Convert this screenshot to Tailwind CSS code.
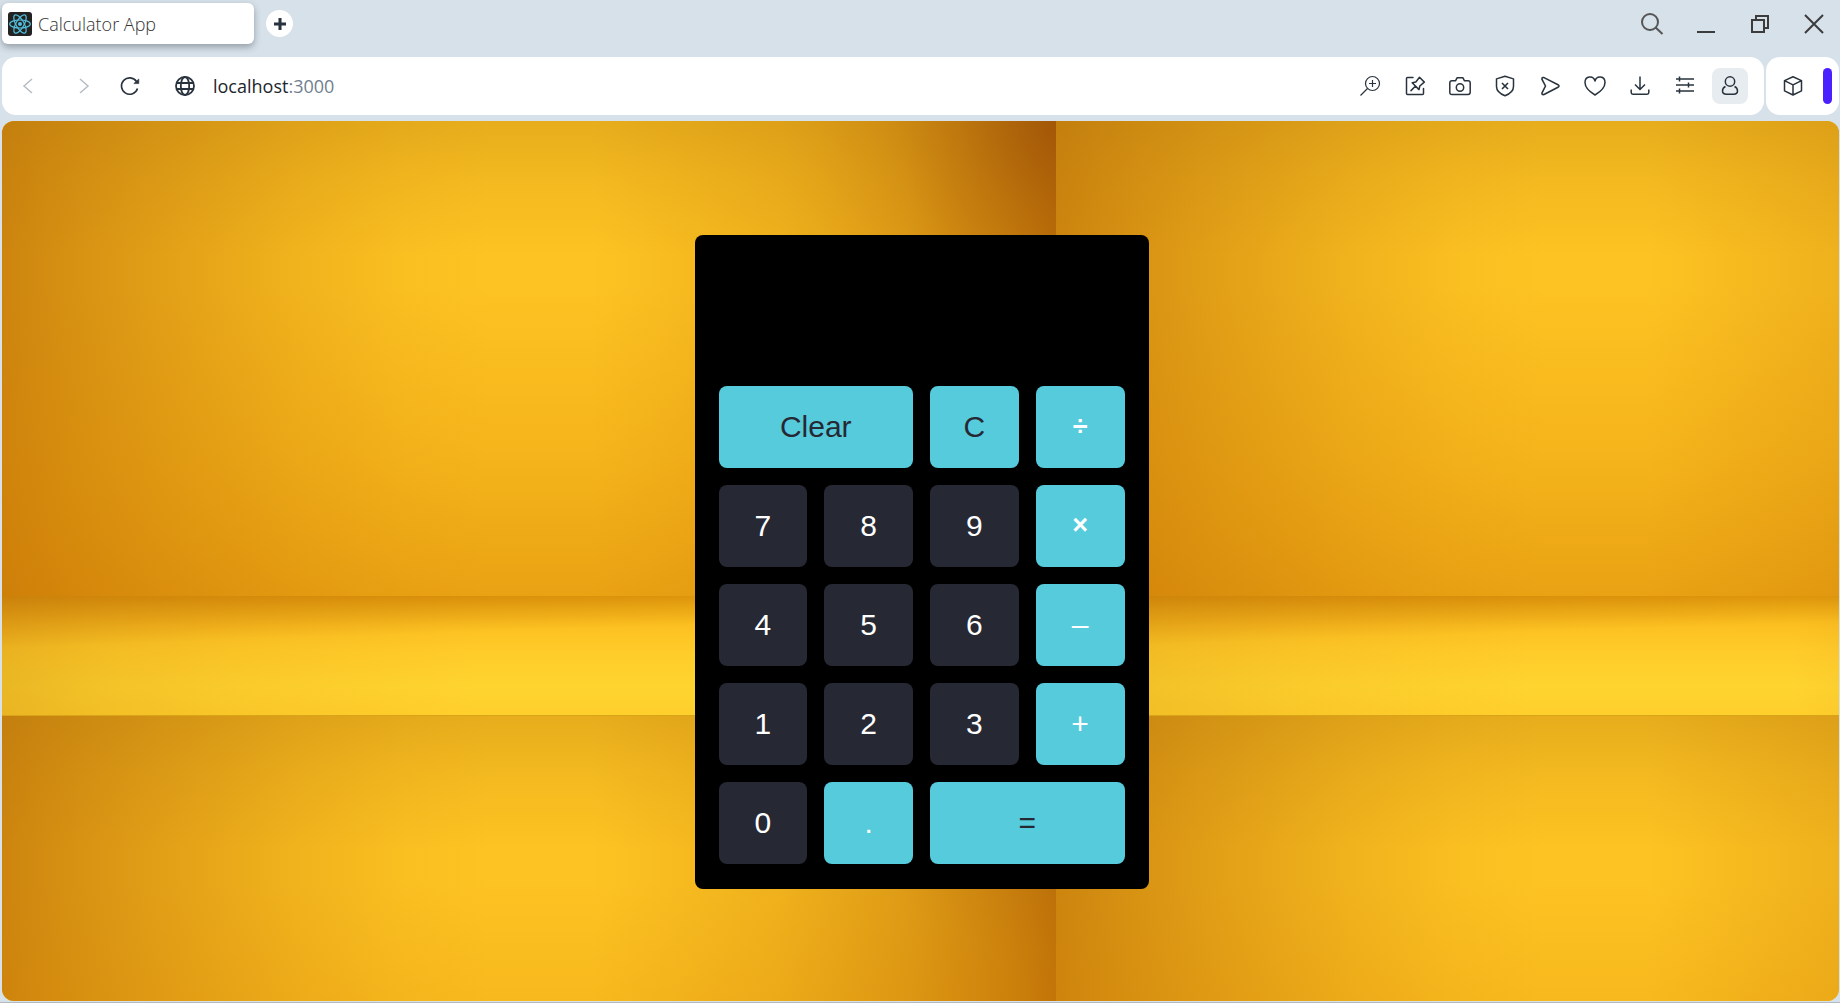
<!DOCTYPE html>
<html lang="en">
<head>
<meta charset="utf-8">
<meta name="viewport" content="width=device-width, initial-scale=1">
<title>Calculator App</title>
<script src="https://cdn.jsdelivr.net/npm/@tailwindcss/browser@4"></script>
</head>
<body class="flex min-h-screen flex-col border-b border-[#b4b9be] bg-[#d7e1ea] font-['Open_Sans',sans-serif] text-[#29333d]">

<!-- Tab strip -->
<header class="flex h-[57px] items-start justify-between pt-[3px] pr-2.5 pl-0.5">
  <div class="flex items-center gap-3">
    <a href="#" class="flex h-[41px] w-[252px] items-center gap-1.5 rounded-md bg-white pl-1.5 text-lg font-light text-[#333] shadow-[0_3px_7px_rgba(60,70,80,0.45)]">
      <svg class="size-6 shrink-0" viewBox="0 0 24 24" fill="none" stroke="#53c1de" stroke-width="1.2" aria-hidden="true">
        <rect width="24" height="24" rx="3" fill="#222" stroke="none"/>
        <ellipse cx="12" cy="12" rx="10.3" ry="4"/>
        <ellipse cx="12" cy="12" rx="10.3" ry="4" transform="rotate(60 12 12)"/>
        <ellipse cx="12" cy="12" rx="10.3" ry="4" transform="rotate(120 12 12)"/>
        <circle cx="12" cy="12" r="2" fill="#53c1de" stroke="none"/>
      </svg>
      <span>Calculator App</span>
    </a>
    <button class="flex size-[27px] items-center justify-center rounded-full bg-white" aria-label="New tab">
      <svg class="size-3" viewBox="0 0 12 12" stroke="#29333d" stroke-width="3" aria-hidden="true"><path d="M6 0v12M0 6h12"/></svg>
    </button>
  </div>
  <div class="flex gap-[22px] pt-[5px] text-[#3c3c3c]">
    <button class="flex size-8 items-center justify-center" aria-label="Search tabs">
      <svg class="size-6" viewBox="0 0 24 24" fill="none" stroke="#555" stroke-width="2" aria-hidden="true"><circle cx="10" cy="10" r="8"/><path d="M15.6 15.6 22.5 22"/></svg>
    </button>
    <button class="flex size-8 items-center justify-center" aria-label="Minimize">
      <svg class="size-6" viewBox="0 0 24 24" stroke="currentColor" stroke-width="2" aria-hidden="true"><path d="M3 20h18"/></svg>
    </button>
    <button class="flex size-8 items-center justify-center" aria-label="Restore">
      <svg class="size-6" viewBox="0 0 24 24" fill="none" stroke="currentColor" stroke-width="2" aria-hidden="true"><path d="M4 8h12v12H4zM8 8V4h12v12h-4"/></svg>
    </button>
    <button class="flex size-8 items-center justify-center" aria-label="Close">
      <svg class="size-6" viewBox="0 0 24 24" stroke="currentColor" stroke-width="2" aria-hidden="true"><path d="m3 3 18 18M21 3 3 21"/></svg>
    </button>
  </div>
</header>

<!-- Address bar -->
<nav class="flex h-[58px] gap-0.5 pr-px pl-0.5">
  <div class="flex flex-1 items-center rounded-[14px] bg-white pr-4 pl-2">
    <button class="flex size-9 items-center justify-center" aria-label="Back">
      <svg class="size-6" viewBox="0 0 24 24" fill="none" stroke="#b6bdc3" stroke-width="1.5" aria-hidden="true"><path d="m16 5-8 7 8 7"/></svg>
    </button>
    <button class="ml-5 flex size-9 items-center justify-center" aria-label="Forward">
      <svg class="size-6" viewBox="0 0 24 24" fill="none" stroke="#b6bdc3" stroke-width="1.5" aria-hidden="true"><path d="m8 5 8 7-8 7"/></svg>
    </button>
    <button class="ml-2.5 flex size-9 items-center justify-center" aria-label="Reload">
      <svg class="size-6" viewBox="0 0 24 24" fill="none" stroke="currentColor" stroke-width="1.6" aria-hidden="true"><path d="M18.500 7.500A8.200 8.200 0 1 0 19.500 14.500"/><path d="M20.800 5v4.600h-5z" fill="currentColor" stroke-width=".6"/></svg>
    </button>
    <button class="ml-[19px] flex size-9 items-center justify-center" aria-label="Site information">
      <svg class="size-6" viewBox="0 0 24 24" fill="none" stroke="currentColor" stroke-width="1.8" aria-hidden="true"><circle cx="12" cy="12" r="9"/><ellipse cx="12" cy="12" rx="4.200" ry="9"/><path d="M3.800 9h16.400M3.800 15h16.400"/></svg>
    </button>
    <div class="ml-2.5 flex-1 text-lg text-[#20262c]" role="textbox" aria-label="Address">localhost<span class="text-[#71808f]">:3000</span></div>
    <div class="flex gap-[9px]">
      <button class="flex size-9 items-center justify-center" aria-label="Zoom">
        <svg class="size-6" viewBox="0 0 24 24" fill="none" stroke="currentColor" stroke-width="1.2" aria-hidden="true"><circle cx="14.500" cy="9.500" r="7"/><path d="M9.500 14.500 2.500 21.500M14.500 6v7M11 9.500h7"/></svg>
      </button>
      <button class="flex size-9 items-center justify-center" aria-label="Pinboard">
        <svg class="size-6" viewBox="0 0 24 24" fill="none" stroke="currentColor" stroke-width="1.5" stroke-linejoin="round" stroke-linecap="round" aria-hidden="true"><path d="M10 3.500H4.500q-1 0-1 1v15q0 1 1 1h15q1 0 1-1V14.500"/><path d="m16.500 3.300 4.800 4.800-4.500 3.900-.8 3.600-6.800-6.800 3.600-.8zM12.300 12.300l-4.300 4.300"/></svg>
      </button>
      <button class="flex size-9 items-center justify-center" aria-label="Snapshot">
        <svg class="size-6" viewBox="0 0 24 24" fill="none" stroke="currentColor" stroke-width="1.5" stroke-linejoin="round" aria-hidden="true"><path d="M4 6.800h3.500L9.200 3.700h5.600l1.700 3.100H20q2.200 0 2.200 2.200v9.300q0 2.200-2.200 2.200H4q-2.200 0-2.200-2.200V9q0-2.200 2.200-2.200z"/><circle cx="12" cy="13.500" r="3.700"/></svg>
      </button>
      <button class="flex size-9 items-center justify-center" aria-label="Ad blocker">
        <svg class="size-6" viewBox="0 0 24 24" fill="none" stroke="currentColor" stroke-width="1.500" stroke-linejoin="round" aria-hidden="true"><path d="m12 2.200 8.500 2.700v7.600c0 4.500-4 7.500-8.500 9.300-4.500-1.800-8.500-4.800-8.500-9.300V4.900z"/><path d="m9 9 6 6m0-6-6 6" stroke-width="1.600"/></svg>
      </button>
      <button class="flex size-9 items-center justify-center" aria-label="Send to device">
        <svg class="size-6" viewBox="0 0 24 24" fill="none" stroke="currentColor" stroke-width="1.600" stroke-linejoin="round" aria-hidden="true"><path d="M6 3.600 20 10.700q2 1.300 0 2.500L6 20.500q-2.400.6-2-1.700L7.500 12 4 5.300q-.3-2.300 2-1.700z"/></svg>
      </button>
      <button class="flex size-9 items-center justify-center" aria-label="Bookmark">
        <svg class="size-6" viewBox="0 0 24 24" fill="none" stroke="currentColor" stroke-width="1.500" stroke-linejoin="round" aria-hidden="true"><path d="M12 7C10.500 1.200 2 1.600 2 8.500c0 5 5 9.500 10 12.500 5-3 10-7.500 10-12.500C22 1.600 13.500 1.200 12 7z"/></svg>
      </button>
      <button class="flex size-9 items-center justify-center" aria-label="Downloads">
        <svg class="size-6" viewBox="0 0 24 24" fill="none" stroke="currentColor" stroke-width="1.500" aria-hidden="true"><path d="M12 2.500v13M7 10.500l5 5 5-5M3.200 15.500v3q0 1.700 1.700 1.700h14.200q1.700 0 1.700-1.700v-3"/></svg>
      </button>
      <button class="flex size-9 items-center justify-center" aria-label="Easy setup">
        <svg class="size-6" viewBox="0 0 24 24" fill="none" stroke="currentColor" stroke-width="1.500" aria-hidden="true"><path d="M3 5h18M3 11h18M3 17h18M6.500 2.500v5M15.500 8.500v5M6.500 14.500v5"/></svg>
      </button>
      <button class="flex size-9 items-center justify-center rounded-lg bg-[#e7ecf0]" aria-label="Profile">
        <svg class="size-6" viewBox="0 0 24 24" fill="none" stroke="currentColor" stroke-width="1.500" aria-hidden="true"><circle cx="12" cy="7.500" r="4.700"/><path d="M7.500 12.500C5 13.500 4.500 15.500 4.500 17c0 2 1.500 3.200 4 3.200h7c2.500 0 4-1.200 4-3.200 0-1.500-.5-3.500-3-4.500"/></svg>
      </button>
    </div>
  </div>
  <div class="flex items-center rounded-[14px] bg-white pr-[7px] pl-[9px]">
    <button class="flex size-9 items-center justify-center" aria-label="Extensions">
      <svg class="size-6" viewBox="0 0 24 24" fill="none" stroke="currentColor" stroke-width="1.500" stroke-linejoin="round" aria-hidden="true"><path d="m12 2.800 8.500 3.800v10.200L12 21l-8.500-4.200V6.600zM3.500 6.600l8.500 4.200 8.500-4.200M12 10.800V21"/></svg>
    </button>
    <button class="ml-3 h-9 w-[9px] rounded-full bg-[#4a20ff]" aria-label="Open side panel"></button>
  </div>
</nav>

<!-- Page content -->
<main class="relative mt-1.5 mr-px mb-px ml-0.5 flex flex-1 items-center justify-center overflow-hidden rounded-xl bg-[#f4b81c] pt-0.5 pl-0.5">
  <!-- Tiled wall-and-shelf backdrop -->
  <svg class="absolute inset-0 h-full w-full" aria-hidden="true">
    <defs>
      <linearGradient id="sides"><stop offset="0" stop-color="#b86a06" stop-opacity=".7"/><stop offset=".07" stop-color="#b86a06" stop-opacity=".55"/><stop offset=".15" stop-color="#b86a06" stop-opacity=".4"/><stop offset=".28" stop-color="#b86a06" stop-opacity=".18"/><stop offset=".38" stop-color="#b86a06" stop-opacity=".05"/><stop offset=".46" stop-color="#b86a06" stop-opacity="0"/><stop offset=".56" stop-color="#b86a06" stop-opacity="0"/><stop offset=".74" stop-color="#b86a06" stop-opacity=".2"/><stop offset=".86" stop-color="#b86a06" stop-opacity=".45"/><stop offset=".95" stop-color="#b86a06" stop-opacity=".72"/><stop offset="1" stop-color="#b86a06" stop-opacity=".9"/></linearGradient>
      <linearGradient id="top" x2="0" y2="1"><stop offset="0" stop-color="#a86e0c" stop-opacity=".26"/><stop offset=".12" stop-color="#a86e0c" stop-opacity=".12"/><stop offset=".28" stop-color="#a86e0c" stop-opacity="0"/><stop offset=".35" stop-color="#d88000" stop-opacity="0"/><stop offset=".7" stop-color="#d88000" stop-opacity=".22"/><stop offset="1" stop-color="#d07800" stop-opacity=".44"/></linearGradient>
      <radialGradient id="corner" cx="1054" cy="0" r="240" gradientUnits="userSpaceOnUse"><stop offset="0" stop-color="#8c3c06" stop-opacity=".5"/><stop offset=".4" stop-color="#8c3c06" stop-opacity=".2"/><stop offset=".7" stop-color="#8c3c06" stop-opacity=".05"/><stop offset="1" stop-color="#8c3c06" stop-opacity="0"/></radialGradient>
      <linearGradient id="shelf" x2="0" y2="1"><stop offset="0" stop-color="#eba40e"/><stop offset=".1" stop-color="#f3b217"/><stop offset=".25" stop-color="#fcc021"/><stop offset=".45" stop-color="#ffcb29"/><stop offset=".75" stop-color="#ffd42f"/><stop offset="1" stop-color="#ffcf2c"/></linearGradient>
      <linearGradient id="shelfSides"><stop offset="0" stop-color="#c08010" stop-opacity=".34"/><stop offset=".1" stop-color="#c88810" stop-opacity=".22"/><stop offset=".25" stop-color="#d89010" stop-opacity=".12"/><stop offset=".45" stop-color="#d89010" stop-opacity="0"/><stop offset=".7" stop-color="#c08010" stop-opacity="0"/><stop offset="1" stop-color="#c08010" stop-opacity=".4"/></linearGradient>
      <linearGradient id="shelfCorner" x2=".3" y2="1"><stop offset="0" stop-color="#b86a06" stop-opacity=".5"/><stop offset=".4" stop-color="#b86a06" stop-opacity="0"/></linearGradient>
      <pattern id="tile" width="1054" height="595" patternUnits="userSpaceOnUse">
        <rect width="1054" height="475" fill="#fdc322"/>
        <rect width="1054" height="475" fill="url(#sides)"/>
        <rect width="1054" height="475" fill="url(#top)"/>
        <rect width="1054" height="475" fill="url(#corner)"/>
        <rect y="475" width="1054" height="120" fill="url(#shelf)"/>
        <rect y="475" width="1054" height="120" fill="url(#shelfSides)"/>
        <rect y="475" width="1054" height="120" fill="url(#shelfCorner)"/>
        <rect y="594" width="1054" height="1" fill="#d8a418"/>
      </pattern>
    </defs>
    <rect width="100%" height="100%" fill="url(#tile)"/>
  </svg>

  <section class="relative w-[454px] rounded-lg bg-black px-6 pb-[25px] font-['Liberation_Sans',Arial,sans-serif] text-[30px] text-white" aria-label="Calculator">
    <output class="block h-[151px]" aria-label="Result"></output>
    <div class="grid grid-cols-4 gap-[17px]">
      <button class="col-span-2 h-[82px] rounded-lg bg-[#56cbdc] pb-0.5 text-[#262833]">Clear</button>
      <button class="h-[82px] rounded-lg bg-[#56cbdc] pb-0.5 text-[#262833]">C</button>
      <button class="h-[82px] rounded-lg bg-[#56cbdc] pb-0.5 text-[27px] font-bold">÷</button>
      <button class="h-[82px] rounded-lg bg-[#262833] pb-0.5">7</button>
      <button class="h-[82px] rounded-lg bg-[#262833] pb-0.5">8</button>
      <button class="h-[82px] rounded-lg bg-[#262833] pb-0.5">9</button>
      <button class="h-[82px] rounded-lg bg-[#56cbdc] pb-0.5 text-[27px] font-bold">×</button>
      <button class="h-[82px] rounded-lg bg-[#262833] pb-0.5">4</button>
      <button class="h-[82px] rounded-lg bg-[#262833] pb-0.5">5</button>
      <button class="h-[82px] rounded-lg bg-[#262833] pb-0.5">6</button>
      <button class="h-[82px] rounded-lg bg-[#56cbdc] pb-0.5">–</button>
      <button class="h-[82px] rounded-lg bg-[#262833] pb-0.5">1</button>
      <button class="h-[82px] rounded-lg bg-[#262833] pb-0.5">2</button>
      <button class="h-[82px] rounded-lg bg-[#262833] pb-0.5">3</button>
      <button class="h-[82px] rounded-lg bg-[#56cbdc] pb-0.5">+</button>
      <button class="h-[82px] rounded-lg bg-[#262833] pb-0.5">0</button>
      <button class="h-[82px] rounded-lg bg-[#56cbdc] pb-0.5">.</button>
      <button class="col-span-2 h-[82px] rounded-lg bg-[#56cbdc] pb-0.5 text-[#262833]">=</button>
    </div>
  </section>
</main>
</body>
</html>
